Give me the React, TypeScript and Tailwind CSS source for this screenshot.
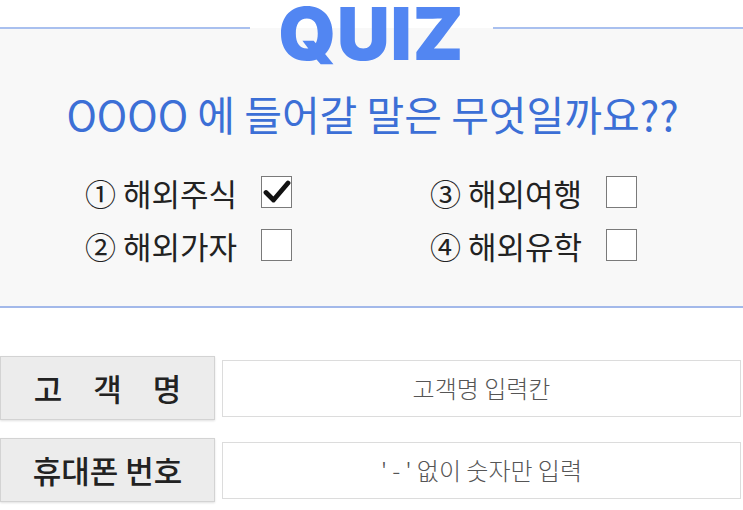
import React from 'react';

const FONT = { fontFamily: '"Noto Sans CJK KR", "Noto Sans", sans-serif' };

const OPTIONS = [
  { label: '① 해외주식', checked: true },
  { label: '③ 해외여행', checked: false },
  { label: '② 해외가자', checked: false },
  { label: '④ 해외유학', checked: false },
];

function CheckBox({ checked }: { checked: boolean }) {
  return (
    <span className="w-[31px] h-[32px] border-[1.5px] border-[#7a7a7a] bg-white flex items-center justify-center">
      {checked && (
        <svg width="28" height="24" viewBox="0 0 28 24">
          <path d="M3 12.5 L10.5 20 L25 3" fill="none" stroke="#111" strokeWidth="4.8" strokeLinecap="round" strokeLinejoin="round" />
        </svg>
      )}
    </span>
  );
}

function FormRow({ label, placeholder, wide }: { label: string; placeholder: string; wide?: boolean }) {
  return (
    <div className="flex items-center h-[64px]">
      <div className="w-[215px] h-full bg-[#ececec] border border-[#d3d3d3] shadow-[0_1px_2px_rgba(0,0,0,0.12)] flex items-center justify-center">
        <span className={`text-[31px] font-medium text-[#222] ${wide ? 'tracking-[31px] pl-[31px]' : ''}`}>{label}</span>
      </div>
      <div className="ml-[7px] w-[519px] h-[57px] bg-white border border-[#dcdcdc] flex items-center justify-center">
        <span className="text-[24px] font-light text-[#555]">{placeholder}</span>
      </div>
    </div>
  );
}

export default function App() {
  return (
    <div className="w-[743px] h-[510px] bg-white overflow-hidden" style={FONT}>
      {/* title */}
      <div className="h-[66px] flex items-start bg-[linear-gradient(to_bottom,#ffffff_28px,#f8f8f8_28px)]">
        <div className="flex-1 h-[2px] mt-[27px] bg-[#a9c0ef]" />
        <span
          className="px-[28px] text-[73px] font-black leading-[62px] text-[#5286f2] tracking-[1px] mt-[3px]"
          style={{ fontFamily: 'Inter, "Noto Sans", sans-serif' }}
        >
          QUIZ
        </span>
        <div className="flex-1 h-[2px] mt-[27px] bg-[#a9c0ef]" />
      </div>

      {/* panel */}
      <div className="h-[242px] bg-[#f8f8f8] border-b-2 border-[#a3b9ea] flex flex-col">
        <div className="text-center text-[41px] text-[#3c6fd6] leading-none mt-[27px] pl-[2px]">
          OOOO 에 들어갈 말은 무엇일까요??
        </div>
        <div className="grid grid-cols-[345px_345px] pl-[85px] mt-[42px] gap-y-[21px]">
          {OPTIONS.map((o) => (
            <div key={o.label} className="flex items-center gap-[24px] h-[32px]">
              <span className="text-[31px] text-[#222] leading-none">{o.label}</span>
              <CheckBox checked={o.checked} />
            </div>
          ))}
        </div>
      </div>

      {/* form */}
      <div className="mt-[48px] flex flex-col gap-[18px]">
        <FormRow label="고객명" placeholder="고객명 입력칸" wide />
        <FormRow label="휴대폰 번호" placeholder="' - ' 없이 숫자만 입력" />
      </div>
    </div>
  );
}
